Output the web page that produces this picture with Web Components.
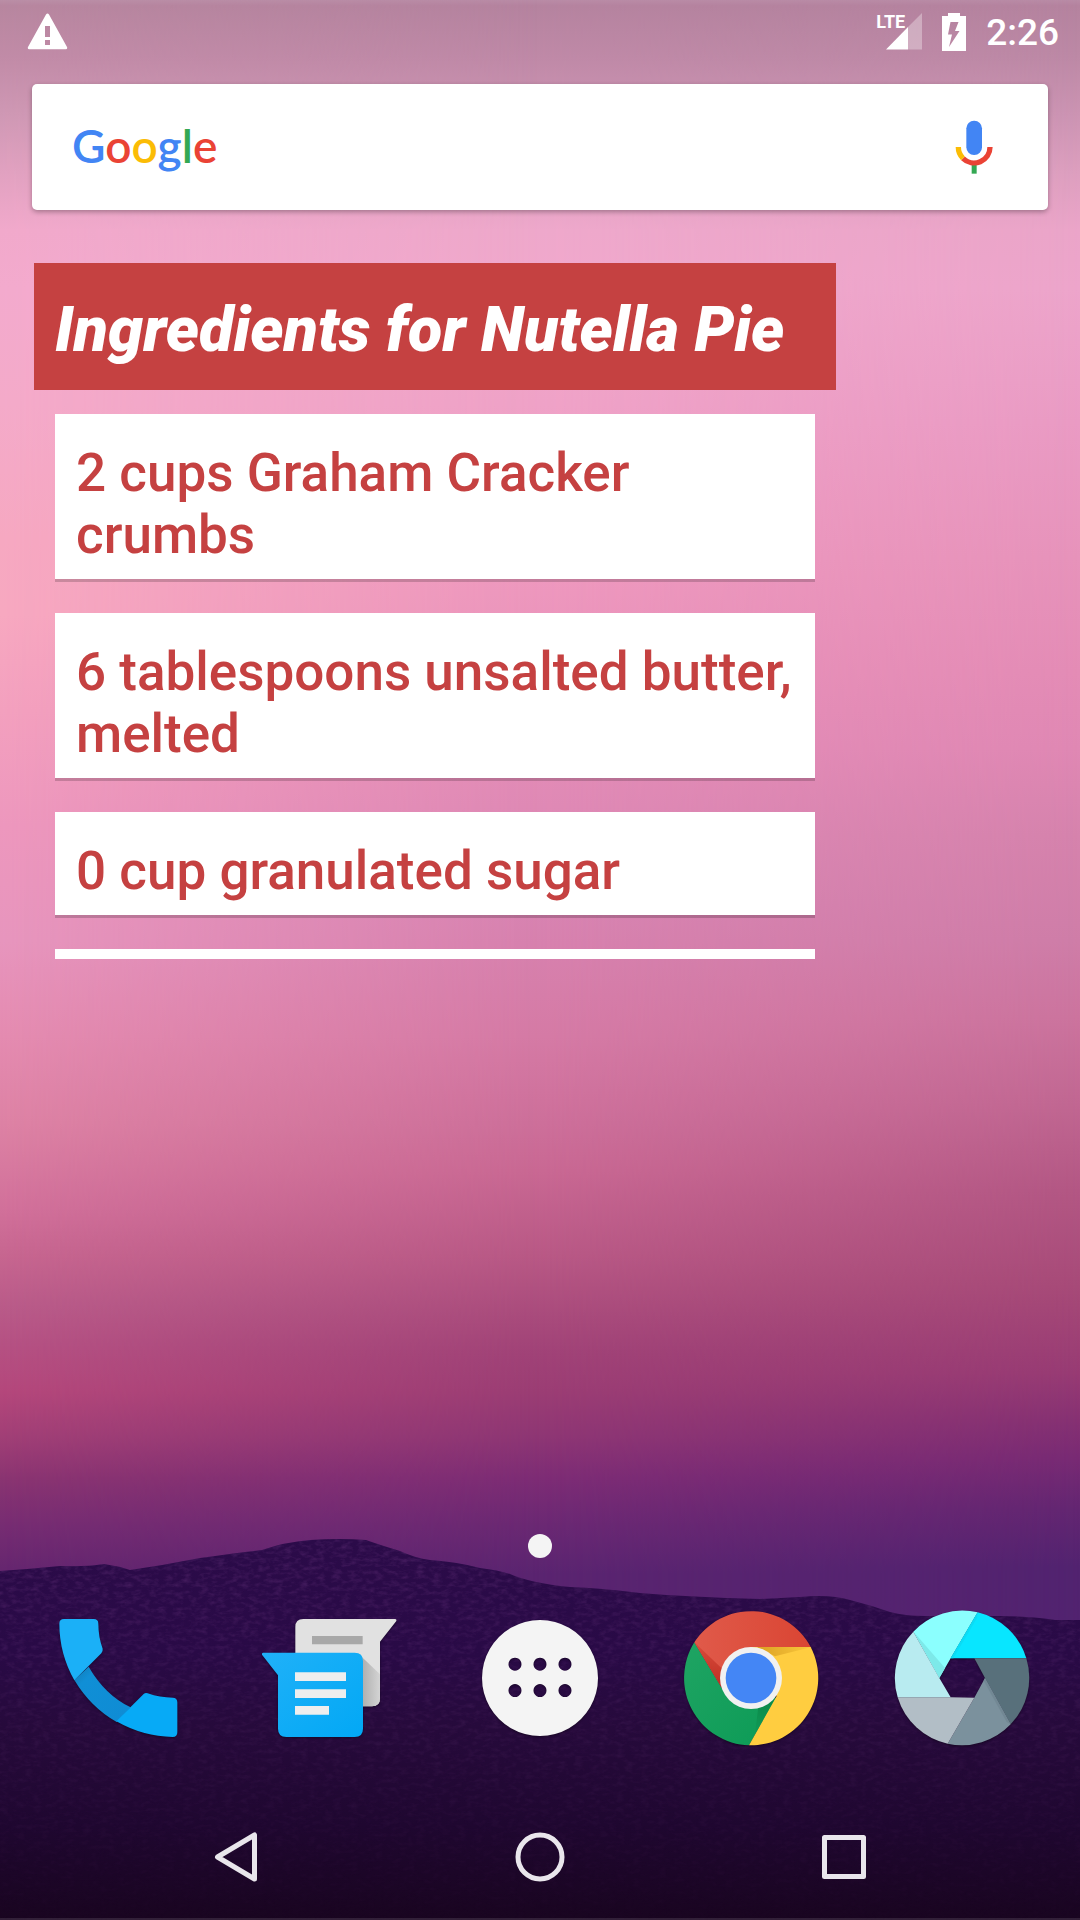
<!DOCTYPE html>
<html lang="en">
<head>
<meta charset="utf-8">
<meta name="viewport" content="width=device-width, initial-scale=1">
<title>Home screen</title>
<style>
  body { margin: 0; font-family: Roboto, "Noto Sans", sans-serif; }
</style>
</head>
<body>
<home-screen>
  <status-bar slot="status" time="2:26" network="LTE"></status-bar>
  <search-bar></search-bar>
  <recipe-widget heading="Ingredients for Nutella Pie">
    <ingredient-card>2 cups Graham Cracker crumbs</ingredient-card>
    <ingredient-card>6 tablespoons unsalted butter, melted</ingredient-card>
    <ingredient-card>0 cup granulated sugar</ingredient-card>
    <ingredient-card></ingredient-card>
  </recipe-widget>
  <page-dots slot="bottom"></page-dots>
  <app-dock slot="bottom"></app-dock>
  <nav-bar slot="bottom"></nav-bar>
</home-screen>

<script>
const define = (name, html, setup) => {
  const template = document.createElement('template');
  template.innerHTML = html;
  customElements.define(name, class extends HTMLElement {
    constructor() {
      super();
      this.attachShadow({ mode: 'open' }).append(template.content.cloneNode(true));
    }
    connectedCallback() { if (setup) setup(this, this.shadowRoot); }
  });
};

/* Dusk sky: three vertical gradients blended from left to right, with hills below */
define('wall-paper', `
<style>
  :host { display: block; overflow: hidden; }
  div, svg { position: absolute; inset: 0; width: 100%; height: 100%; }
  .right { background: linear-gradient(#b98ba6 0, #b5839f .3%, #bd89a6 3%, #cc94b3 6%, #dd9fbf 9%, #eba5c9 12%, #eda5cb 15%, #ea9bc4 22%, #e793bb 29%, #e48cb6 35%, #e088b4 39%, #d683ad 43.5%, #cf7da8 49%, #cc749e 53%, #c16792 57.5%, #b35784 62%, #a74a78 67%, #983b74 71.5%, #863173 74%, #782a74 76%, #642672 78.5%, #522370 81.6%, #512370 100%); }
  .middle { background: linear-gradient(#b98ba6 0, #b5839f .3%, #bf89a7 3%, #cd94b3 6%, #dfa0c0 9%, #eea8cb 12%, #f0a8cc 14%, #efa2c7 21%, #ee98be 30%, #e68fb8 37%, #df89b5 42%, #d884b2 47%, #d57aa5 54%, #cd6f9a 58.5%, #c96893 61%, #b85885 65.5%, #a94b7c 68.5%, #a04277 70.5%, #9b3d74 72.5%, #8e3674 74.8%, #7d2c75 77%, #6a2873 79.5%, #5a2470 82%, #552370 100%);
    mask-image: linear-gradient(90deg, #000 50%, transparent); }
  .left { background: linear-gradient(#ba8ea6 0, #b7869f .3%, #c18ba7 3%, #cf98b4 6%, #e1a1c0 9%, #f1a9cb 12%, #f3aacd 15%, #f4aac9 21%, #f6a8c1 28%, #f7a8c0 32%, #f3a0be 37%, #ed97bd 43%, #e795bd 49%, #e48bb0 54%, #dd82a4 58.5%, #d1709a 63%, #c6658f 65.5%, #b95b89 68%, #b55183 70%, #b4477b 72.5%, #a13f76 74.8%, #8a3471 77%, #762c72 79.5%, #66266f 81.7%, #5f2470 100%);
    mask-image: linear-gradient(90deg, #000, transparent 50%); }
  .edges { box-shadow: inset 0 -2px #ffffff1c; }
</style>
<div class="right"></div><div class="middle"></div><div class="left"></div>
<svg viewBox="0 0 1080 1920" preserveAspectRatio="none" aria-hidden="true">
  <defs>
    <linearGradient id="hill" x1="0" y1="1540" x2="0" y2="1920" gradientUnits="userSpaceOnUse">
      <stop offset="0" stop-color="#2b0b49"/><stop offset=".3" stop-color="#290a46"/>
      <stop offset=".5" stop-color="#260a3b"/><stop offset=".75" stop-color="#1f0730"/><stop offset="1" stop-color="#190520"/>
    </linearGradient>
    <linearGradient id="fade" x1="0" y1="1540" x2="0" y2="1920" gradientUnits="userSpaceOnUse">
      <stop offset="0" stop-color="#404040"/><stop offset=".4" stop-color="#222"/><stop offset="1" stop-color="#040404"/>
    </linearGradient>
    <filter id="grain" x="0" y="0" width="100%" height="100%">
      <feTurbulence type="fractalNoise" baseFrequency=".12 .24" numOctaves="3" seed="4"/>
      <feColorMatrix values="0 0 0 0 .36  0 0 0 0 .1  0 0 0 0 .42  1.8 0 0 0 -.75"/>
      <feComposite in2="SourceGraphic" operator="in"/>
    </filter>
    <mask id="m"><rect y="1530" width="1080" height="390" fill="url(#fade)"/></mask>
    <path id="ridge" d="M0 1571Q30 1569 60 1566Q85 1567 104 1564Q118 1566 130 1570Q165 1565 200 1558Q235 1553 262 1550Q285 1542 310 1540Q340 1538 366 1540Q380 1545 400 1551Q415 1558 430 1560Q458 1562 480 1568Q498 1570 510 1574Q530 1583 570 1587Q600 1588 640 1593Q690 1597 760 1599Q780 1598 800 1597Q830 1594 850 1600Q870 1605 890 1612Q905 1616 925 1616H1000Q1040 1617 1055 1620H1080V1920H0Z"/>
  </defs>
  <use href="#ridge" fill="url(#hill)"/>
  <g mask="url(#m)"><use href="#ridge" filter="url(#grain)"/></g>
</svg>
<div class="edges"></div>`);

define('home-screen', `
<style>
  :host { display: block; }
  .screen { position: relative; isolation: isolate; min-height: 100vh; display: flex; flex-direction: column; }
  wall-paper { position: absolute; inset: 0; z-index: -1; }
  main { padding: 21px 32px 0; display: flex; flex-direction: column; gap: 53px; }
  footer { margin-top: auto; }
</style>
<div class="screen">
  <wall-paper></wall-paper>
  <slot name="status"></slot>
  <main><slot></slot></main>
  <footer><slot name="bottom"></slot></footer>
</div>`);

define('status-bar', `
<style>
  :host { display: block; color: #fff; }
  .bar { height: 63px; padding: 0 21px 0 27px; display: flex; align-items: center; }
  svg { display: block; }
  .group { margin-left: auto; display: flex; align-items: center; gap: 20px; }
  .signal { position: relative; padding-left: 10px; }
  .network { position: absolute; left: 0; top: -1px; font: 700 18px/20px Roboto, sans-serif; }
  .time { font-size: 37px; line-height: 44px; font-weight: 500; padding-top: 2px; }
</style>
<div class="bar">
  <svg width="42" height="38" viewBox="0 0 42 38" role="img" aria-label="Warning"><path fill="#fff" fill-rule="evenodd" d="M19 1.500q1.500-2 3 0L40 34q.8 2-1.300 2.300H2.300Q.2 36 1 34ZM18 13v11h5V13ZM18 27v5h5v-5Z"/></svg>
  <div class="group">
    <div class="signal">
      <svg width="36" height="37" viewBox="0 0 36 37" aria-hidden="true"><path fill="#fff" fill-opacity=".32" d="M36 0V36.500H22V14Z"/><path fill="#fff" d="M22 14V36.500H0Z"/></svg>
      <span class="network"></span>
    </div>
    <svg width="24" height="38" viewBox="0 0 24 38" role="img" aria-label="Battery charging"><path fill="#fff" fill-rule="evenodd" d="M6 0H18V3H24V38H0V3H6ZM8.500 9L6 21.500H10L7 34L17.500 18H13L16.500 9Z"/></svg>
    <time class="time"></time>
  </div>
</div>`, (el, root) => {
  root.querySelector('.time').textContent = el.getAttribute('time');
  root.querySelector('.network').textContent = el.getAttribute('network');
});

define('search-bar', `
<style>
  :host { display: block; }
  form { height: 126px; margin: 0; display: flex; align-items: center; justify-content: space-between; background: #fff; border-radius: 5px; box-shadow: 0 2px 5px #0000004d; }
  button { border: 0; margin: 0; background: none; cursor: pointer; }
  .logo { flex: 1; height: 100%; padding: 0 0 2px 40px; text-align: left; font: 600 46px/60px Lato, sans-serif; color: #4285f4; }
  .r { color: #ea4335; } .y { color: #fbbc05; } .g { color: #34a853; }
  .mic { padding: 0 44px; }
  svg { display: block; }
</style>
<form role="search">
  <button class="logo" type="button"><span>G</span><span class="r">o</span><span class="y">o</span><span>g</span><span class="g">l</span><span class="r">e</span></button>
  <button class="mic" type="button" aria-label="Voice search">
    <svg width="60" height="60" viewBox="433 352 180 180" fill="none">
      <rect x="500" y="363" width="47" height="103" rx="23" fill="#4285f4"/>
      <path d="M523.500 494V522" stroke="#34a853" stroke-width="15"/>
      <path d="M571 442A47.500 47.500 0 0 1 490 476" stroke="#ea4335" stroke-width="16"/>
      <path d="M476 442A47.500 47.500 0 0 0 490 476" stroke="#fbbc05" stroke-width="16"/>
    </svg>
  </button>
</form>`);

define('recipe-widget', `
<style>
  :host { display: block; padding: 0 2px; }
  section { max-width: 802px; }
  h1 { margin: 0; padding: 30px 21px 23px; background: #c54141; color: #fff; font: italic 900 63px/74px Roboto, sans-serif; }
  .list { box-sizing: border-box; height: 569px; overflow: hidden; padding: 24px 21px 0; display: flex; flex-direction: column; gap: 34px; }
</style>
<section><h1></h1><div class="list" role="list"><slot></slot></div></section>`,
(el, root) => { root.querySelector('h1').textContent = el.getAttribute('heading'); });

define('ingredient-card', `
<style>
  :host { display: block; flex: none; }
  div { padding: 28px 21px 13px; min-height: 62px; background: #fff; color: #c54141; box-shadow: 0 3px #0000002e; font-size: 53px; line-height: 62px; font-weight: 500; }
</style>
<div role="listitem"><slot></slot></div>`);

define('page-dots', `
<style>
  :host { display: flex; justify-content: center; margin-bottom: 45px; }
  span { width: 24px; height: 24px; border-radius: 50%; background: #f4f4f4; }
</style><span></span>`);

define('app-dock', `
<style>
  :host { display: grid; grid-template-columns: repeat(5, 1fr); padding: 0 12px; margin-bottom: 41px; }
  button { border: 0; padding: 0; background: none; display: flex; justify-content: center; cursor: pointer; }
  svg { display: block; width: 150px; height: 150px; filter: drop-shadow(0 1px 1px #00000066); }
</style>
<button type="button" aria-label="Phone"><svg viewBox="39 39 450 450">
  <defs><linearGradient id="d" x1="140" y1="240" x2="280" y2="380" gradientUnits="userSpaceOnUse"><stop offset="0" stop-color="#127dba"/><stop offset=".2" stop-color="#108fd6"/><stop offset="1" stop-color="#0f8cd4"/></linearGradient></defs>
  <path fill="url(#d)" d="M176 230Q225 315 302 352L260 396Q182 352 133 270Z"/>
  <path fill="#1bb0f7" d="M102 87H191Q205 87 205 101Q205 140 218 176Q219 184 214 190L133 271Q88 190 88 101Q88 87 102 87Z"/>
  <path fill="#07aaf6" d="M341 312Q346 308 353 310Q390 323 428 323Q442 323 442 337V427Q442 441 428 441Q340 440 259 394Z"/>
</svg></button>
<button type="button" aria-label="Messages"><svg viewBox="672 39 450 450">
  <defs><linearGradient id="s" x1="990" y1="0" x2="1050" y2="0" gradientUnits="userSpaceOnUse"><stop offset="0" stop-color="#aaa"/><stop offset="1" stop-color="#d4d4d4"/></linearGradient>
  <linearGradient id="n" x1="0" y1="0" x2="1" y2="1"><stop offset="0" stop-color="#20b1f8"/><stop offset="1" stop-color="#02a8f5"/></linearGradient></defs>
  <path fill="#e1e1e1" d="M820 87H1096Q1101 88 1099 93L1050 155V325Q1050 349 1026 349H796V111Q796 87 820 87Z"/>
  <path fill="url(#s)" d="M990 196L1050 253V325Q1050 349 1026 349H980Z"/>
  <path fill="#a8a8a8" d="M846 138H998V163H846Z"/>
  <path fill="url(#n)" d="M699 188H974Q999 188 999 213V416Q999 441 974 441H769Q744 441 744 416V256L696 194Q694 189 699 188Z"/>
  <path fill="#eee" d="M795 247H948V273H795ZM795 298H948V324H795ZM795 348H897V374H795Z"/>
</svg></button>
<button type="button" aria-label="Apps"><svg viewBox="15 309 450 450">
  <path fill="#f4f4f4" fill-rule="evenodd" d="M240 360a174 174 0 1 0 .1 0ZM165 473a19.500 19.500 0 1 1-.1 0ZM240 473a19.500 19.500 0 1 1-.1 0ZM315 473a19.500 19.500 0 1 1-.1 0ZM165 552a19.500 19.500 0 1 1-.1 0ZM240 552a19.500 19.500 0 1 1-.1 0ZM315 552a19.500 19.500 0 1 1-.1 0Z"/>
</svg></button>
<button type="button" aria-label="Chrome"><svg viewBox="48 39 450 450">
  <defs><linearGradient id="r" x1="0" y1="0" x2="1" y2="0"><stop offset="0" stop-color="#e05a4a"/><stop offset="1" stop-color="#da4533"/></linearGradient>
  <linearGradient id="rd" x1="0" y1="0" x2="0" y2="1"><stop offset="0" stop-color="#d94c3c"/><stop offset="1" stop-color="#be2e22"/></linearGradient>
  <linearGradient id="yd" x1="0" y1="0" x2="1" y2="0"><stop offset="0" stop-color="#dba023"/><stop offset="1" stop-color="#fbc93c"/></linearGradient>
  <linearGradient id="gr" x1="0" y1="0" x2="1" y2="1"><stop offset="0" stop-color="#1fa463"/><stop offset="1" stop-color="#0c9b56"/></linearGradient>
  <linearGradient id="gd" x1="0" y1="0" x2="0" y2="1"><stop offset="0" stop-color="#0b8748"/><stop offset="1" stop-color="#0f9b57"/></linearGradient></defs>
  <path fill="url(#gr)" d="M103 157A202 202 0 0 0 267 466L348 325L273 264L185 293Z"/>
  <path fill="#ffcd40" d="M452 171A202 202 0 0 1 267 466L350 318L273 171Z"/>
  <path fill="url(#r)" d="M103 157A202 202 0 0 1 452 171H273V264L186 295Z"/>
  <path fill="url(#rd)" d="M103 157L185 235V293Z"/>
  <path fill="url(#yd)" d="M290 171H455L345 199Z"/>
  <path fill="url(#gd)" d="M347 322L295 350L285 432Z"/>
  <circle cx="273" cy="264" r="93" fill="#f1f1f1"/><circle cx="273" cy="264" r="76" fill="#4486f5"/>
</svg></button>
<button type="button" aria-label="Camera"><svg viewBox="681 39 450 450">
  <path fill="#8bfffe" d="M838 264L760 125A202 202 0 0 1 953 67L872 205Z"/>
  <path fill="#7de9e9" d="M838 264L762 127L855 234Z"/>
  <path fill="#08e6ff" d="M872 205L953 67A202 202 0 0 1 1099 205Z"/>
  <path fill="#0adcf5" d="M872 205L953 67L951 84L880 205Z"/>
  <path fill="#58707b" d="M943 205H1099A202 202 0 0 1 1052 403L975 264Z"/>
  <path fill="#7b919d" d="M975 264L1052 403A202 202 0 0 1 863 461L943 323Z"/>
  <path fill="#728894" d="M975 264L1052 403L1040 396L971 272Z"/>
  <path fill="#b2bec6" d="M943 323L863 461A202 202 0 0 1 713 322H872Z"/>
  <path fill="#b8ebf0" d="M872 322H713A202 202 0 0 1 760 125L838 264Z"/>
</svg></button>`);

define('nav-bar', `
<style>
  :host { display: block; }
  nav { height: 126px; padding: 0 84px; display: grid; grid-template-columns: repeat(3, 1fr); }
  button { border: 0; padding: 0; background: none; display: flex; justify-content: center; align-items: center; cursor: pointer; }
  svg { display: block; fill: none; stroke: #e9e6ec; stroke-width: 5; stroke-linejoin: round; }
</style>
<nav aria-label="System">
  <button type="button" aria-label="Back"><svg width="60" height="60" viewBox="0 0 60 60"><path d="M11.500 30L48.500 8V52Z"/></svg></button>
  <button type="button" aria-label="Home"><svg width="60" height="60" viewBox="0 0 60 60"><circle cx="30" cy="30" r="22"/></svg></button>
  <button type="button" aria-label="Overview"><svg width="60" height="60" viewBox="0 0 60 60"><path d="M10.500 10.500H49.500V49.500H10.500Z"/></svg></button>
</nav>`);
</script>
</body>
</html>
